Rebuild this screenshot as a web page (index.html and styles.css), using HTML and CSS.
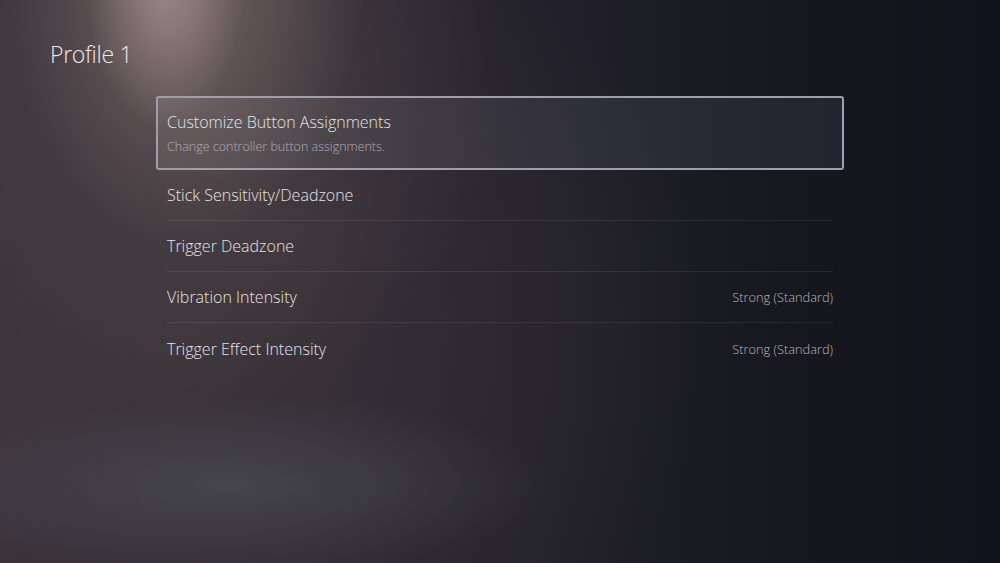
FILE: index.html
```html
<!DOCTYPE html>
<html lang="en">
<head>
<meta charset="utf-8">
<title>Profile 1</title>
<link rel="stylesheet" href="styles.css">
</head>
<body>
<div class="screen">
  <h1 class="title">Profile 1</h1>
  <div class="menu">
    <div class="item selected">
      <div class="label">Customize Button Assignments</div>
      <div class="desc">Change controller button assignments.</div>
    </div>
    <div class="item row">
      <div class="label">Stick Sensitivity/Deadzone</div>
    </div>
    <div class="item row">
      <div class="label">Trigger Deadzone</div>
    </div>
    <div class="item row">
      <div class="label">Vibration Intensity</div>
      <div class="value">Strong (Standard)</div>
    </div>
    <div class="item row last">
      <div class="label">Trigger Effect Intensity</div>
      <div class="value">Strong (Standard)</div>
    </div>
  </div>
</div>
</body>
</html>
```

FILE: styles.css
```css
html, body {
  margin: 0;
  padding: 0;
}
body {
  width: 1000px;
  height: 563px;
  overflow: hidden;
  font-family: "Open Sans", "Noto Sans", sans-serif;
  font-weight: 300;
}
.screen {
  width: 1000px;
  height: 563px;
  box-sizing: border-box;
  padding: 37px 0 0 50px;
  background:
    radial-gradient(ellipse 80px 150px at 165px -20px, rgba(175,155,150,0.7), rgba(175,155,150,0) 100%),
    radial-gradient(ellipse 180px 280px at 185px -30px, rgba(145,125,122,0.55), rgba(145,125,122,0) 100%),
    radial-gradient(ellipse 300px 380px at 200px 40px, rgba(100,86,86,0.45), rgba(100,86,86,0) 100%),
    radial-gradient(ellipse 320px 90px at 230px 485px, rgba(80,84,92,0.55), rgba(80,84,92,0) 100%),
    radial-gradient(ellipse 560px 480px at 150px 330px, rgba(64,56,60,0.7), rgba(64,56,60,0) 100%),
    linear-gradient(90deg, #38323a 0%, #2e2a32 30%, #22212b 55%, #171720 78%, #12121c 100%);
}
.title {
  margin: 0;
  font-size: 23px;
  font-weight: 300;
  color: #ebe9ec;
  line-height: 34px;
  letter-spacing: -0.3px;
}
.menu {
  margin: 25px 0 0 106px;
  width: 688px;
  display: flex;
  flex-direction: column;
}
.item {
  box-sizing: border-box;
  display: flex;
}
.selected {
  height: 74px;
  flex-direction: column;
  padding: 13px 0 0 9px;
  border: 2px solid #a19eab;
  border-radius: 3px;
  background: linear-gradient(90deg, rgba(255,255,255,0.07), rgba(125,135,165,0.13));
}
.selected .desc {
  margin-top: 5px;
  font-size: 12.5px;
  color: #b0adb3;
  line-height: 17px;
}
.label {
  font-size: 16px;
  color: #e4e2e6;
  line-height: 22px;
}
.row {
  height: 51px;
  margin: 0 11px;
  align-items: center;
  justify-content: space-between;
  border-bottom: 1px solid rgba(255,255,255,0.08);
}
.row.last {
  border-bottom: none;
}
.value {
  font-size: 12.8px;
  color: #b9b7bd;
}
```
